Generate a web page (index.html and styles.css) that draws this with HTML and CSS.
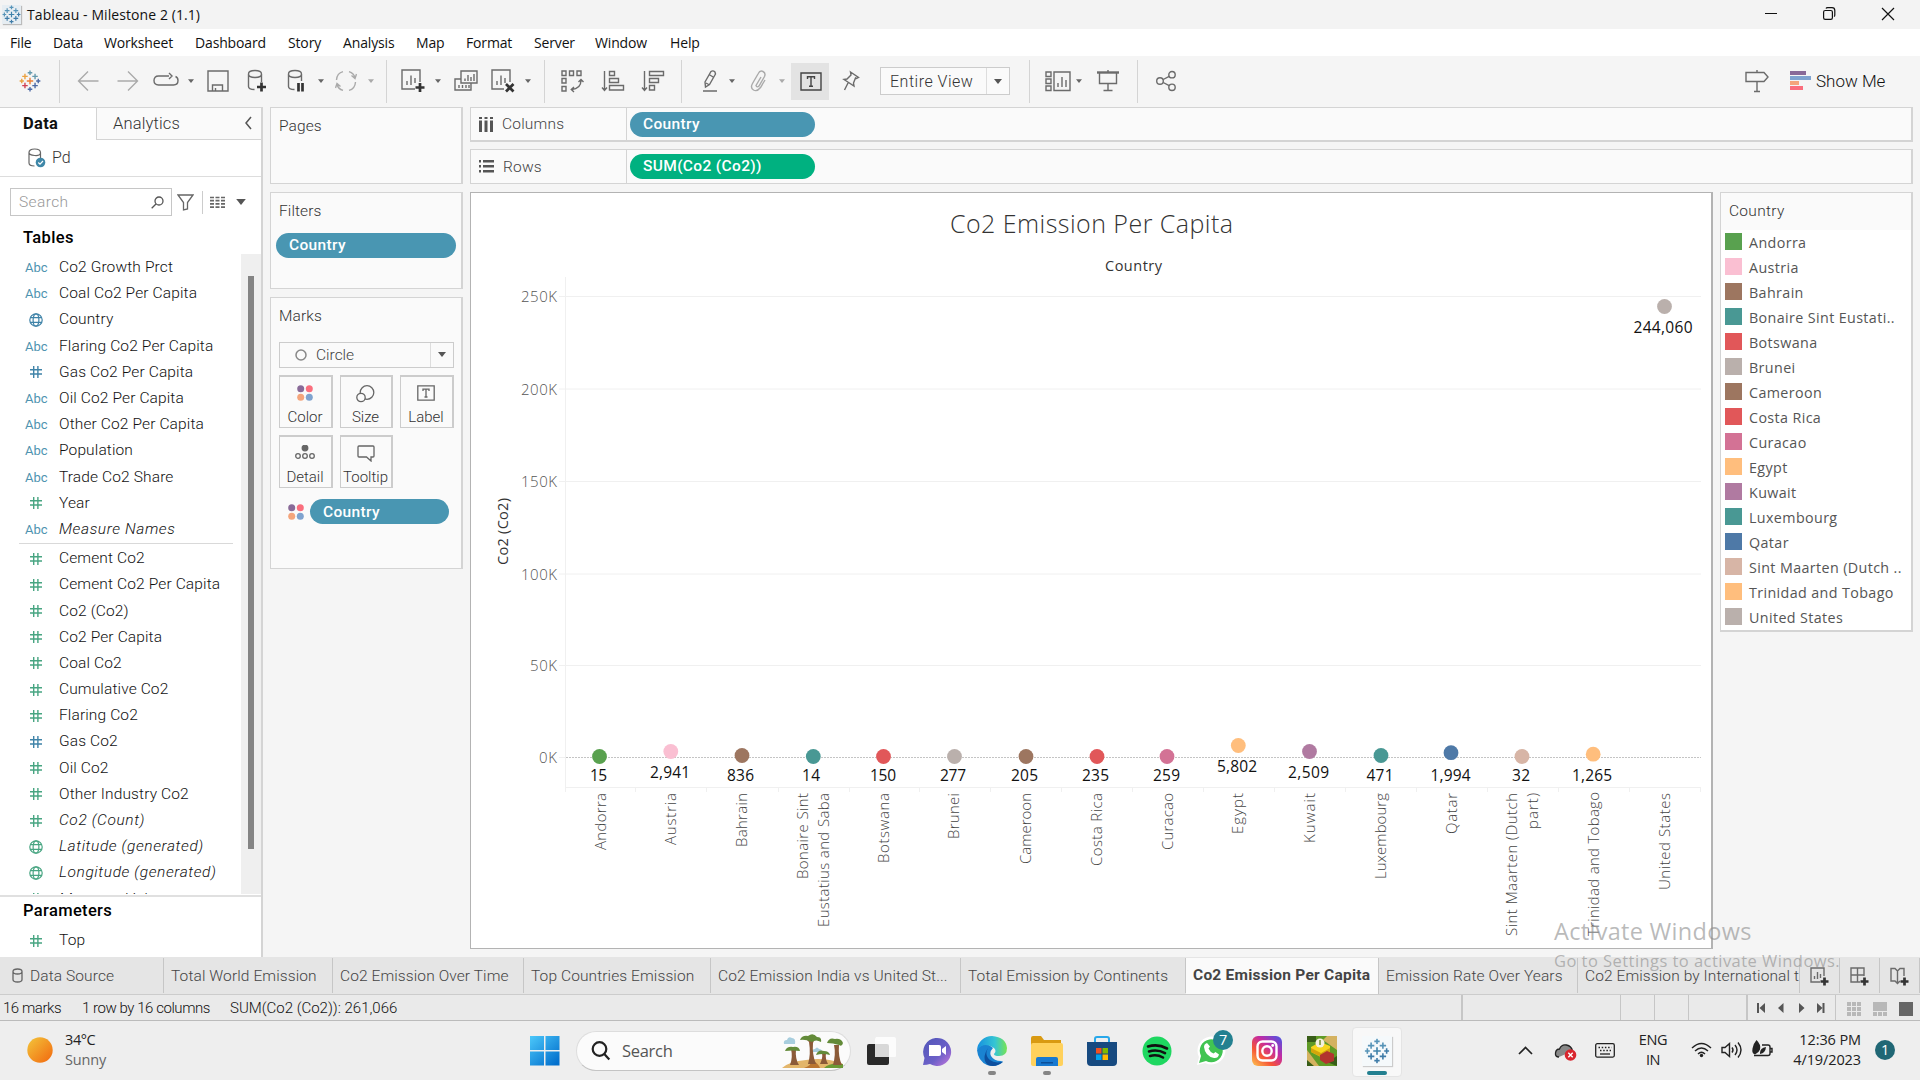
FILE: index.html
```html
<!DOCTYPE html>
<html lang="en">
<head>
<meta charset="utf-8">
<title>Tableau - Milestone 2 (1.1)</title>
<link rel="stylesheet" href="styles.css">
</head>
<body>
<svg class="defs" width="0" height="0">
  <symbol id="hash" viewBox="0 0 14 14"><path d="M4.7 1v12M8.9 1v12M1 4.8h12M1 9h12" fill="none" stroke="currentColor" stroke-width="1.4"/></symbol>
  <symbol id="globe" viewBox="0 0 14 14"><g fill="none" stroke="currentColor" stroke-width="1.2"><circle cx="7" cy="7" r="6.2"/><ellipse cx="7" cy="7" rx="2.9" ry="6.2"/><path d="M1.3 4.7h11.4M1.3 9.3h11.4"/></g></symbol>
  <symbol id="caret" viewBox="0 0 8 5"><path d="M0 0h8L4 5z" fill="currentColor"/></symbol>
  <symbol id="tlogo" viewBox="0 0 24 24"><g fill="none" stroke-width="1.5"><path stroke="var(--c1)" d="M12 8.5v7M8.5 12h7"/><path stroke="var(--c2)" d="M6.5 4v6M3.5 7h6"/><path stroke="var(--c3)" d="M17.5 4v6M14.5 7h6"/><path stroke="var(--c4)" d="M6.5 14v6M3.5 17h6"/><path stroke="var(--c5)" d="M17.5 14v6M14.5 17h6"/><path stroke="var(--c3)" d="M12 .5v5M9.5 3h5"/><path stroke="var(--c5)" d="M12 18.500v5M9.500 21h5M21 9.500v5M18.700 12h4.600"/><path stroke="var(--c2)" d="M3 9.500v5M.7 12h4.600"/></g></symbol>
  <symbol id="dots4" viewBox="0 0 16 16"><circle cx="3.700" cy="3.700" r="3.500" fill="#896a98"/><circle cx="12.300" cy="3.700" r="3.500" fill="#fa6e7d"/><circle cx="3.700" cy="12.300" r="3.500" fill="#f4a57c"/><circle cx="12.300" cy="12.300" r="3.500" fill="#7fa3cf"/></symbol>
</svg>

<header class="titlebar">
  <svg class="app-icon mono" width="19" height="19" viewBox="0 0 24 24"><use href="#tlogo"/></svg>
  <span class="app-title">Tableau - Milestone 2 (1.1)</span>
  <svg class="window-controls" width="132" height="14" viewBox="0 0 132 14" fill="none" stroke="#111" stroke-width="1.200"><path d="M0 6.500h12M117 1l12 12M129 1l-12 12"/><rect x="58.600" y="3.500" width="8.800" height="8.800" rx="1.600"/><path d="M61 1.500q.4-.8 1.500-.8h4.500q2.800 0 2.800 2.800v4.500q0 1.100-.8 1.600"/></svg>
</header>

<nav class="menubar"><span>File</span><span>Data</span><span>Worksheet</span><span>Dashboard</span><span>Story</span><span>Analysis</span><span>Map</span><span>Format</span><span>Server</span><span>Window</span><span>Help</span></nav>

<div class="toolbar">
  <span class="tool w59"><svg class="brand" width="22" height="22"><use href="#tlogo"/></svg></span>
  <i class="sep"></i>
  <span class="tool w40 m8 dim"><svg width="22" height="22" viewBox="0 0 22 22"><path d="M21.500 11H1.500M11 1.500L1.500 11l9.500 9.500"/></svg></span>
  <span class="tool w40 dim"><svg width="22" height="22" viewBox="0 0 22 22"><path d="M.5 11h20M11 1.500l9.500 9.500-9.500 9.500"/></svg></span>
  <span class="tool w36"><svg width="26" height="22" viewBox="0 0 26 22"><path d="M16 6H5.500Q1 6 1 10.500T5.500 15h15q4.500 0 4.500-4.500 0-3-2.500-4M16 3l3 3-3 3"/></svg></span>
  <span class="tool w14"><svg width="6" height="4"><use href="#caret"/></svg></span>
  <span class="tool w39"><svg width="22" height="22" viewBox="0 0 22 22"><path d="M1 1h20v20H1zM5.500 21v-6h10v6M8.500 21v-3"/></svg></span>
  <span class="tool w40"><svg width="20" height="24" viewBox="0 0 20 24"><path d="M1.500 5v12.500q0 3 6 3M14.500 5v8M1.500 5q0-3.500 6.500-3.500t6.500 3.500-6.500 3.500-6.500-3.500"/><path class="bold" d="M14.500 13.500v9M10 18h9"/></svg></span>
  <span class="tool w37"><svg width="18" height="24" viewBox="0 0 18 24"><path d="M1.500 5v12.500q0 3 6 3M14.500 5v7M1.500 5q0-3.500 6.500-3.500t6.500 3.500-6.500 3.500-6.500-3.500"/><path class="bold" d="M11.500 14v8.500M15.500 14v8.500"/></svg></span>
  <span class="tool w14"><svg width="6" height="4"><use href="#caret"/></svg></span>
  <span class="tool w35 dim"><svg width="22" height="22" viewBox="0 0 22 22"><path d="M1.500 10Q2 3 8 1.600M14 1.600q5 1.500 6 6.400M20.500 12q-.5 7-6.500 8.400M8 20.400q-5-1.500-6-6.400M16.500 5.500l3.500 3 1.500-4.500M5.500 16.500l-3.500-3L.5 18"/></svg></span>
  <span class="tool w16 dim"><svg width="6" height="4"><use href="#caret"/></svg></span>
  <i class="sep m7"></i>
  <span class="tool w37 m7"><svg width="24" height="24" viewBox="0 0 24 24"><path d="M14 20H1V1h18v12M6 16v-4M10 16V6.500M14 14V9"/><path class="bold" d="M19 14v9M14.500 18.500h9"/></svg></span>
  <span class="tool w13"><svg width="6" height="4"><use href="#caret"/></svg></span>
  <span class="tool w43"><svg width="24" height="24" viewBox="0 0 24 24"><path d="M7 2h16v12H7zM11 12V9.500M14 12V6M17 12V8M20 12V5M7 10H1v11h16v-7M5 19v-3M8.500 19v-3M12 19v-3M15 19v-3"/></svg></span>
  <span class="tool w31"><svg width="24" height="24" viewBox="0 0 24 24"><path d="M13 20H1V1h18v12M6 16v-4M10 16V6.500M14 14V9"/><path class="bold" d="M15 15l7.500 7.500M22.500 15L15 22.500"/></svg></span>
  <span class="tool w20"><svg width="6" height="4"><use href="#caret"/></svg></span>
  <i class="sep m6"></i>
  <span class="tool w40 m7"><svg width="24" height="24" viewBox="0 0 24 24"><path d="M2 2h4v4.500H2zM9.500 2h4v4.500h-4zM17 2h4v4.500h-4zM2 9.500h4V14H2zM2 17.500h4V22H2zM21 11q0 9-9.500 9.500M18.500 13l2.500-2.500L23.500 13M14 18l-2.700 2.500L14 23"/></svg></span>
  <span class="tool w42"><svg width="24" height="22" viewBox="0 0 24 22"><path d="M3.500 1v19M1 17.500l2.500 3 2.500-3M8.500 1.500h5v4h-5zM8.500 8.500h9v4h-9zM8.500 15.500h14v4.500h-14z"/></svg></span>
  <span class="tool w38"><svg width="24" height="22" viewBox="0 0 24 22"><path d="M3.500 1v19M1 17.500l2.500 3 2.500-3M8.500 1.500h14v4h-14zM8.500 8.500h9v4h-9zM8.500 15.500h5v4.500h-5z"/></svg></span>
  <i class="sep m9"></i>
  <span class="tool w29 m14"><svg width="18" height="24" viewBox="0 0 18 24"><path d="M3 13L9 2.500q2-1.500 4 .5l.5 2-6 10.500L3.500 18zM7 5.500l5 3M4 14l3.500 2M1 22h14"/></svg></span>
  <span class="tool w14"><svg width="6" height="4"><use href="#caret"/></svg></span>
  <span class="tool w40 dim"><svg width="18" height="22" viewBox="0 0 18 22"><path d="M11 7L6 15.500q1 2.500 3 .5l5.500-9.500Q16 3 13 1.500T8 4L2.500 13.500Q0 18 3.500 20t7-2.500L15 10"/></svg></span>
  <span class="tool w6 dim"><svg width="6" height="4"><use href="#caret"/></svg></span>
  <span class="tool on"><svg width="22" height="19" viewBox="0 0 22 19"><path d="M1 1h20v17H1z"/><path d="M7.500 7V4.800h7V7M11 4.800v9.200M9 14.200h4"/></svg></span>
  <span class="tool w43"><svg width="18" height="22" viewBox="0 0 18 22"><path d="M8.500 2l8 5.500-2 1-1-.5-2 5 .5 3-10-6.500 3-.5 4-4zM6 13l-3.500 7"/></svg></span>
  <div class="select fit"><span>Entire View</span><i><svg width="8" height="5"><use href="#caret"/></svg></i></div>
  <i class="sep m19"></i>
  <span class="tool w33 m11"><svg width="26" height="22" viewBox="0 0 26 22"><path d="M1 2h5v4.500H1zM1 9h5v4.500H1zM1 16h5v4.500H1zM9 2h16v18.500H9zM13 17v-4M17 17V7M21 17v-7"/></svg></span>
  <span class="tool w9"><svg width="6" height="4"><use href="#caret"/></svg></span>
  <span class="tool w50"><svg width="22" height="22" viewBox="0 0 22 22"><path class="mid" d="M0 2.500h22"/><path d="M11 0v3M2.500 3v10.500h17V3M11 13.500V20M6.500 20.500h9"/></svg></span>
  <i class="sep m4"></i>
  <span class="tool w39 m8"><svg width="22" height="22" viewBox="0 0 22 22"><circle cx="5" cy="11" r="3.300"/><circle cx="17" cy="4.700" r="3.200"/><circle cx="17" cy="17.300" r="3.200"/><path d="M8.200 9.500l6-3.200M8.200 12.500l6 3.200"/></svg></span>
  <span class="tool guide"><svg width="24" height="24" viewBox="0 0 24 24"><path d="M1 3.500h18l4 4.500-4 4.500H1zM12 1v2.500M12 12.500v10M9 22.500h6"/></svg></span>
  <span class="showme"><svg width="22" height="20" viewBox="0 0 22 20"><path fill="#896a98" d="M0 0h16v4H0z"/><path fill="#7fa3cf" d="M0 5h21v4H0z"/><path fill="#f4a57c" d="M0 10h9v4H0z"/><path fill="#fa6e7d" d="M0 15h13v4H0z"/></svg>Show Me</span>
</div>

<main class="workspace">
  <aside class="data-pane">
    <div class="pane-tabs"><b>Data</b><span>Analytics<svg width="8" height="14" viewBox="0 0 8 14"><path d="M7 1L2 7l5 6" fill="none" stroke="#555" stroke-width="1.500"/></svg></span></div>
    <div class="source"><svg width="18" height="20" viewBox="0 0 18 20" fill="none" stroke="#666" stroke-width="1.200"><path d="M1 4.500v10.500q0 3 5.500 3M12.500 4.500V10M1 4.500Q1 1 6.700 1t5.800 3.500-5.800 3T1 4.500"/><circle cx="12.500" cy="14.500" r="4.800" fill="#3f87a8" stroke="none"/><path d="M10.300 14.500l1.700 1.700 3-3.200" stroke="#fff"/></svg><span>Pd</span></div>
    <div class="search-row">
      <div class="search"><span>Search</span><svg width="13" height="13" viewBox="0 0 13 13" fill="none" stroke="#555" stroke-width="1.300"><circle cx="8" cy="5" r="4"/><path d="M5 8L.7 12.300"/></svg></div>
      <svg class="funnel" width="17" height="17" viewBox="0 0 17 17" fill="none" stroke="#666" stroke-width="1.300"><path d="M1 1h15l-5.500 7.500V15l-4 1V8.500z"/></svg>
      <i></i>
      <svg class="grid" width="16" height="13" viewBox="0 0 16 13"><path d="M0 1.500h16M0 4.700h16M0 7.900h16M0 11.100h16" stroke="#666" stroke-width="1.700" stroke-dasharray="4 1.500"/></svg>
      <svg class="c" width="10" height="6"><use href="#caret"/></svg>
    </div>
    <h2>Tables</h2>
    <div class="fields">
      <div class="list">
        <p><em>Abc</em>Co2 Growth Prct</p>
        <p><em>Abc</em>Coal Co2 Per Capita</p>
        <p><svg><use href="#globe"/></svg>Country</p>
        <p><em>Abc</em>Flaring Co2 Per Capita</p>
        <p><svg><use href="#hash"/></svg>Gas Co2 Per Capita</p>
        <p><em>Abc</em>Oil Co2 Per Capita</p>
        <p><em>Abc</em>Other Co2 Per Capita</p>
        <p><em>Abc</em>Population</p>
        <p><em>Abc</em>Trade Co2 Share</p>
        <p class="g"><svg><use href="#hash"/></svg>Year</p>
        <p class="it"><em>Abc</em>Measure Names</p>
        <hr>
        <p class="g"><svg><use href="#hash"/></svg>Cement Co2</p>
        <p class="g"><svg><use href="#hash"/></svg>Cement Co2 Per Capita</p>
        <p class="g"><svg><use href="#hash"/></svg>Co2 (Co2)</p>
        <p class="g"><svg><use href="#hash"/></svg>Co2 Per Capita</p>
        <p class="g"><svg><use href="#hash"/></svg>Coal Co2</p>
        <p class="g"><svg><use href="#hash"/></svg>Cumulative Co2</p>
        <p class="g"><svg><use href="#hash"/></svg>Flaring Co2</p>
        <p><svg><use href="#hash"/></svg>Gas Co2</p>
        <p class="g"><svg><use href="#hash"/></svg>Oil Co2</p>
        <p class="g"><svg><use href="#hash"/></svg>Other Industry Co2</p>
        <p class="g it"><svg><use href="#hash"/></svg>Co2 (Count)</p>
        <p class="g it"><svg><use href="#globe"/></svg>Latitude (generated)</p>
        <p class="g it"><svg><use href="#globe"/></svg>Longitude (generated)</p>
        <p class="g it"><svg><use href="#hash"/></svg>Measure Values</p>
      </div>
      <div class="scroll"><i></i></div>
    </div>
    <div class="params"><h2>Parameters</h2><p class="g"><svg><use href="#hash"/></svg>Top</p></div>
  </aside>

  <section class="cards">
    <div class="card pages"><h3>Pages</h3></div>
    <div class="card filters"><h3>Filters</h3><span class="pill">Country</span></div>
    <div class="card marks">
      <h3>Marks</h3>
      <div class="select mark-type"><span><svg width="12" height="12"><circle cx="6" cy="6" r="5" fill="none" stroke="#888" stroke-width="1.500"/></svg>Circle</span><i><svg width="8" height="5"><use href="#caret"/></svg></i></div>
      <div class="mark-grid">
        <div><svg width="16" height="16"><use href="#dots4"/></svg>Color</div>
        <div><svg width="19" height="18" viewBox="0 0 19 18" fill="#fafafa" stroke="#666" stroke-width="1.300"><circle cx="11" cy="7.500" r="6.800"/><circle cx="5" cy="12.500" r="4.200"/></svg>Size</div>
        <div><svg width="18" height="16" viewBox="0 0 18 16" fill="none" stroke="#666" stroke-width="1.300"><path d="M.8.8h16.400v14.400H.8zM6 6V4.200h6V6M9 4.200v7.600M7.500 12h3"/></svg>Label</div>
        <div><svg width="20" height="14" viewBox="0 0 20 14" fill="none" stroke="#666" stroke-width="1.300"><circle cx="10" cy="3" r="2.800" fill="#666"/><circle cx="3" cy="11" r="2.300"/><circle cx="10" cy="11" r="2.300"/><circle cx="17" cy="11" r="2.300"/></svg>Detail</div>
        <div><svg width="18" height="17" viewBox="0 0 18 17" fill="none" stroke="#666" stroke-width="1.300"><path d="M2 1h14q1 0 1 1v9q0 1-1 1h-2v4l-4.500-4H2q-1 0-1-1V2q0-1 1-1z"/></svg>Tooltip</div>
      </div>
      <div class="mark-pill"><svg width="16" height="16"><use href="#dots4"/></svg><span class="pill">Country</span></div>
    </div>
  </section>

  <section class="sheet">
    <div class="shelf cols"><span><svg width="14" height="15" viewBox="0 0 14 15" fill="#555"><path d="M0 0h3v2H0zM5.500 0h3v2h-3zM11 0h3v2h-3zM0 3.500h3V15H0zM5.500 3.500h3V15h-3zM11 3.500h3V15h-3z"/></svg>Columns</span><b class="pill">Country</b></div>
    <div class="shelf rows"><span><svg width="15" height="13" viewBox="0 0 15 13" fill="#555"><path d="M0 0h2v2.500H0zM0 5h2v2.500H0zM0 10h2v2.500H0zM4 0h11v2.500H4zM4 5h11v2.500H4zM4 10h11v2.500H4z"/></svg>Rows</span><b class="pill green">SUM(Co2 (Co2))</b></div>
    <div class="view-row">
      <div class="view">
        <svg class="chart" width="1240" height="755" viewBox="471 193 1240 755">
          <text class="title" x="950" y="233" textLength="283">Co2 Emission Per Capita</text>
          <text class="field" x="1105" y="271" textLength="57">Country</text>
          <g class="gridlines"><path d="M559 296.500H1701M559 389H1701M559 481.500H1701M559 574H1701M559 665.500H1701"/><path d="M565.500 277V792M559 757.500h6M565.500 787.500H1701M635.500 788v4M706.500 788v4M778.500 788v4M849.500 788v4M919.500 788v4M990.500 788v4M1061.500 788v4M1132.500 788v4M1203.500 788v4M1274.500 788v4M1345.500 788v4M1416.500 788v4M1487.500 788v4M1558.500 788v4M1629.500 788v4M1700.500 788v4"/></g>
          <path class="zero" d="M566 757.500H1701"/>
          <g class="axis"><text x="521" y="302" textLength="36">250K</text><text x="521" y="395" textLength="36">200K</text><text x="521" y="487" textLength="36">150K</text><text x="521" y="580" textLength="36">100K</text><text x="530" y="671" textLength="27">50K</text><text x="539" y="763" textLength="18">0K</text></g>
          <text class="field" transform="translate(508 565) rotate(-90)" textLength="67">Co2 (Co2)</text>
          <g>
            <circle cx="599.500" cy="756.500" r="7.400" fill="#59a14f"/><circle cx="670.800" cy="751.500" r="7.400" fill="#fabfd2"/><circle cx="742" cy="755.500" r="7.400" fill="#9d7660"/><circle cx="813.300" cy="756.500" r="7.400" fill="#499894"/><circle cx="883.500" cy="756.500" r="7.400" fill="#e15759"/><circle cx="954.500" cy="756.500" r="7.400" fill="#bab0ac"/><circle cx="1026" cy="756.500" r="7.400" fill="#9d7660"/><circle cx="1097" cy="756.500" r="7.400" fill="#e15759"/><circle cx="1167" cy="756.500" r="7.400" fill="#d37295"/><circle cx="1238.300" cy="745.500" r="7.400" fill="#ffbe7d"/><circle cx="1309.500" cy="751.500" r="7.400" fill="#b07aa1"/><circle cx="1381" cy="755.500" r="7.400" fill="#499894"/><circle cx="1451" cy="752.700" r="7.400" fill="#4e79a7"/><circle cx="1522" cy="756.500" r="7.400" fill="#d7b5a6"/><circle cx="1593.200" cy="754.200" r="7.400" fill="#ffbe7d"/><circle cx="1664.500" cy="306.500" r="7.400" fill="#bab0ac"/>
          </g>
          <g class="values">
            <text x="598.500" y="781" textLength="17">15</text><text x="670" y="778" textLength="40">2,941</text><text x="740.500" y="781" textLength="27">836</text><text x="811" y="781" textLength="18">14</text><text x="883" y="781" textLength="26">150</text><text x="953" y="781" textLength="26">277</text><text x="1024.500" y="781" textLength="27">205</text><text x="1095.500" y="781" textLength="27">235</text><text x="1166.500" y="781" textLength="27">259</text><text x="1237" y="772" textLength="40">5,802</text><text x="1308.500" y="778" textLength="41">2,509</text><text x="1380" y="781" textLength="27">471</text><text x="1450.500" y="781" textLength="40">1,994</text><text x="1521" y="781" textLength="18">32</text><text x="1592" y="781" textLength="40">1,265</text><text x="1663" y="333" textLength="59">244,060</text>
          </g>
          <g class="cats">
            <text transform="translate(606 850) rotate(-90)" textLength="57">Andorra</text><text transform="translate(676 845) rotate(-90)" textLength="52">Austria</text><text transform="translate(747 847) rotate(-90)" textLength="54">Bahrain</text><text transform="translate(808 879) rotate(-90)" textLength="86">Bonaire Sint</text><text transform="translate(829 927) rotate(-90)" textLength="134">Eustatius and Saba</text><text transform="translate(889 863) rotate(-90)" textLength="70">Botswana</text><text transform="translate(959 839) rotate(-90)" textLength="46">Brunei</text><text transform="translate(1031 864) rotate(-90)" textLength="71">Cameroon</text><text transform="translate(1102 866) rotate(-90)" textLength="73">Costa Rica</text><text transform="translate(1173 850) rotate(-90)" textLength="57">Curacao</text><text transform="translate(1243 834) rotate(-90)" textLength="41">Egypt</text><text transform="translate(1315 843) rotate(-90)" textLength="50">Kuwait</text><text transform="translate(1386 879) rotate(-90)" textLength="86">Luxembourg</text><text transform="translate(1457 834) rotate(-90)" textLength="41">Qatar</text><text transform="translate(1516.500 936) rotate(-90)" textLength="143">Sint Maarten (Dutch</text><text transform="translate(1538 829) rotate(-90)" textLength="36">part)</text><text transform="translate(1598.500 936) rotate(-90)" textLength="144">Trinidad and Tobago</text><text transform="translate(1669.500 890) rotate(-90)" textLength="97">United States</text>
          </g>
        </svg>
      </div>
      <div class="legend">
        <h3>Country</h3>
        <ul>
          <li class="c-green">Andorra</li><li class="c-blush">Austria</li><li class="c-brown">Bahrain</li><li class="c-teal">Bonaire Sint Eustati..</li><li class="c-red">Botswana</li><li class="c-grey">Brunei</li><li class="c-brown">Cameroon</li><li class="c-red">Costa Rica</li><li class="c-pink">Curacao</li><li class="c-orange">Egypt</li><li class="c-purple">Kuwait</li><li class="c-teal">Luxembourg</li><li class="c-blue">Qatar</li><li class="c-tan">Sint Maarten (Dutch ..</li><li class="c-orange">Trinidad and Tobago</li><li class="c-grey">United States</li>
        </ul>
      </div>
    </div>
  </section>
</main>

<nav class="tabs">
  <span class="t1"><svg width="11" height="15" viewBox="0 0 11 15" fill="none" stroke="#666" stroke-width="1.300"><path d="M1 3.500v8q0 2.500 4.500 2.500T10 11.500v-8Q10 1 5.500 1T1 3.500 5.500 6 10 3.500"/></svg>Data Source</span>
  <span class="t2">Total World Emission</span><span class="t3">Co2 Emission Over Time</span><span class="t4">Top Countries Emission</span><span class="t5">Co2 Emission India vs United St...</span><span class="t6">Total Emission by Continents</span><span class="t7">Co2 Emission Per Capita</span><span class="t8">Emission Rate Over Years</span><span class="t9">Co2 Emission by International t</span>
  <span class="new"><svg width="20" height="20" viewBox="0 0 20 20"><path d="M10 15H1V1h13v8M4.500 12V9M7.500 12V5M10.500 11V7"/><path class="bold" d="M14.500 10.500v8M10.500 14.500h8"/></svg></span>
  <span class="new"><svg width="20" height="20" viewBox="0 0 20 20"><path d="M10 15H1V1h13v8M7.500 1v14M1 8h13"/><path class="bold" d="M14.500 10.500v8M10.500 14.500h8"/></svg></span>
  <span class="new"><svg width="20" height="20" viewBox="0 0 20 20"><path d="M10 14l-2.500 2.500L5 14H1V1.500h4L7.500 4 10 1.500h4V9M7.500 4v12"/><path class="bold" d="M14.500 10.500v8M10.500 14.500h8"/></svg></span>
</nav>

<footer class="status">
  <span class="s1">16 marks</span><span class="s2">1 row by 16 columns</span><span class="s3">SUM(Co2 (Co2)): 261,066</span>
  <i class="a"></i><i class="b"></i><i class="c"></i><i class="d"></i>
  <div class="pager"><svg width="68" height="10" viewBox="0 0 68 10" fill="#555"><path d="M0 0h2v10H0zM8 0v10L2.500 5zM26.500 0v10L21 5zM42 0v10l5.500-5zM60 0v10l5.500-5zM65.500 0h2v10h-2z"/></svg></div>
  <div class="modes"><svg width="66" height="14" viewBox="0 0 66 14"><path fill="#b8b8b8" d="M0 0h4v4H0zM5 0h4v4H5zM10 0h4v4h-4zM0 5h4v4H0zM5 5h4v4H5zM10 5h4v4h-4zM0 10h4v4H0zM5 10h4v4H5zM10 10h4v4h-4zM26 0h14v9H26zM26 10h4v4h-4zM31 10h4v4h-4zM36 10h4v4h-4z"/><path fill="#666" d="M52 0h14v14H52z"/></svg></div>
</footer>

<footer class="taskbar">
  <svg class="sun" width="26" height="26"><defs><linearGradient id="sg" x1="0" y1="0" x2="1" y2="1"><stop offset="0" stop-color="#f3c63b"/><stop offset="1" stop-color="#f2670e"/></linearGradient></defs><circle cx="13" cy="13" r="12.700" fill="url(#sg)"/></svg>
  <div class="weather">34°C<small>Sunny</small></div>
  <svg class="win" width="30" height="30" viewBox="0 0 30 30"><defs><linearGradient id="wg" gradientUnits="userSpaceOnUse" x1="0" y1="0" x2="26" y2="28"><stop offset="0" stop-color="#4cc8fa"/><stop offset="1" stop-color="#0370cd"/></linearGradient></defs><path fill="url(#wg)" d="M0 0h14v14H0zM15.500 0h14v14h-14zM0 15.500h14v14H0zM15.500 15.500h14v14h-14z"/></svg>
  <div class="tsearch"><svg width="20" height="20" viewBox="0 0 20 20" fill="none" stroke="#222" stroke-width="2.200"><circle cx="8.500" cy="8" r="6.800"/><path d="M13.300 13l5 5.500"/></svg><span>Search</span>
    <svg class="trees" width="62" height="34" viewBox="0 0 62 34"><path fill="#a8cede" d="M2 10q-1-4 3-4 1-4 5-2 4 0 3 6zM30 18q0-3 3-3 2-3 4 0 3 0 3 3z"/><path fill="#e3b66b" d="M0 34q8-7 24-8 20-3 37 4v4z"/><path fill="#ba7631" d="M22 34q8-3 8-8 6 3 8 8z"/><path fill="#6a9a35" d="M42 34q6-6 19-4v4z"/><path fill="#8b5a38" d="M26 30q3-10 1-22l-4-4h10l-2 5q-1 12 3 21zM8 31q3-8 1-16h5q-1 10 3 16zM38 30q3-6 2-11h4q-1 6 2 11zM51 31q3-11 1-20h5q-1 12 3 20z"/><path fill="#638b39" d="M18 6q2-5 8-4 5-4 9 1 5 0 4 5-5-3-9 0-7-3-12-2zM3 17q2-5 8-4 6-1 7 4-7-1-15 0zM34 21q2-6 8-4 5 0 6 4-7-2-14 0zM45 9q2-6 8-4 6-1 8 4-1 4-4 2-6-2-12-2z"/></svg></div>
  <div class="apps">
    <span><svg width="30" height="30" viewBox="0 0 30 30"><rect y="8" width="22" height="21" rx="2" fill="#292929"/><path d="M9 1h18q2 0 2 2v17q0 1-1 1H8V3z" fill="#fff" opacity=".82"/></svg></span>
    <span><svg width="30" height="30" viewBox="0 0 30 30"><defs><linearGradient id="tg" x1="0" x2="1" y1="0" y2="1"><stop stop-color="#5056b8"/><stop offset=".6" stop-color="#6c60c8"/><stop offset="1" stop-color="#c777dd"/></linearGradient></defs><path d="M1 29l1.500-7A14 14 0 1 1 8 28q-3 1-7 1z" fill="url(#tg)"/><path d="M7 9h10q2 0 2 2v7q0 2-2 2H7zM20 13l4-3v9l-4-3z" fill="#fff"/></svg></span>
    <span class="run"><svg width="32" height="32" viewBox="0 0 32 32"><defs><linearGradient id="eg" x1="0" x2="1"><stop stop-color="#1690df"/><stop offset=".6" stop-color="#35c5d4"/><stop offset="1" stop-color="#78e452"/></linearGradient></defs><path fill="#1a83d2" d="M1 15q4-7 12-5l4 3q-4 4-2 8 3 5 10 5l2 1Q20 33 11 30 2 26 1 15z"/><path fill="#0d4f9e" d="M12 13q-4 7 2 12 5 4 13 1.500Q20 33 12 30 5 24 12 13z"/><path fill="url(#eg)" d="M1 15A15 15 0 0 1 16 1q14 1 15 12 0 8-8 8-5 0-5-2 3-3 0-6Q8 6 1 15z"/></svg></span>
    <span class="run"><svg width="32" height="30" viewBox="0 0 32 30"><path fill="#d99a12" d="M0 2q0-2 2-2h8l3 4h17v7H0z"/><path fill="#ffd15c" d="M2 7h28q2 0 2 2v19q0 2-2 2H2q-2 0-2-2V9q0-2 2-2z"/><path fill="#1879d0" d="M5 30v-7q0-2 2-2h18q2 0 2 2v7z"/><path fill="#0b4f99" d="M10 26h12v1.500H10z"/></svg></span>
    <span><svg width="30" height="30" viewBox="0 0 30 30"><path d="M8 7V3q0-2 2-2h10q2 0 2 2v4" fill="none" stroke="#28a8ea" stroke-width="2"/><path fill="#174a80" d="M0 6h30v20q0 4-4 4H4q-4 0-4-4z"/><path fill="#f25022" d="M9 12h5.500v5.500H9z"/><path fill="#7fba00" d="M15.500 12H21v5.500h-5.500z"/><path fill="#00a4ef" d="M9 18.500h5.500V24H9z"/><path fill="#ffb900" d="M15.500 18.500H21V24h-5.500z"/></svg></span>
    <span><svg width="30" height="30" viewBox="0 0 30 30"><circle cx="15" cy="15" r="14.500" fill="#1ed760"/><path d="M6 10.500q10-3 19 2M7 15.500q8.500-2.500 16 1.700M8 20q7-2 13 1.500" fill="none" stroke="#111" stroke-width="2.600" stroke-linecap="round"/></svg></span>
    <span class="wa"><svg width="31" height="31" viewBox="0 0 31 31"><path d="M1 30l2-8A14 14 0 1 1 9 28z" fill="#fff"/><path d="M3 28l2-7a11.500 11.500 0 1 1 5 5z" fill="#41c452"/><path fill="#fff" d="M11 8l3 3.500-1.500 2q1.500 3.500 5 5l2-1.500 3.500 2.500q-1 4-5 3.500Q9 21 8 12q0-3 3-4z"/></svg><b>7</b></span>
    <span><svg width="30" height="30" viewBox="0 0 30 30"><defs><linearGradient id="ig" x1="0" y1="1" x2=".9" y2="0"><stop stop-color="#fdc64f"/><stop offset=".35" stop-color="#f65337"/><stop offset=".65" stop-color="#c32aa3"/><stop offset="1" stop-color="#5252e0"/></linearGradient></defs><rect width="30" height="30" rx="6" fill="url(#ig)"/><g fill="none" stroke="#fff" stroke-width="2.400"><rect x="5.500" y="5.500" width="19" height="19" rx="5"/><circle cx="15" cy="15" r="4.700"/></g><circle cx="20.700" cy="9.500" r="1.400" fill="#fff"/></svg></span>
    <span><svg width="30" height="30" viewBox="0 0 30 30"><path fill="#609b26" d="M0 0h30v30H0z"/><path fill="#d4b260" d="M0 14L12 30H0zM20 0h10v14L16 4z"/><path fill="#385d18" d="M0 0h9v6H0zM0 24l7 6H0zM20 26l10-6v10z"/><path fill="#f7d51d" d="M4 11l9-5 10 4v6l-9 5-10-5z"/><path fill="#d3a50c" d="M4 12l10 5 9-5v4l-9 5-10-5z"/><path fill="#b2332e" d="M13 19l7-4 7 3v7l-8 3-6-4z"/><circle cx="13" cy="7" r="4.500" fill="#f4f0df"/><path stroke="#6f8f2b" stroke-width="1.500" d="M13 4v5"/></svg></span>
    <span class="active"><svg class="mono tile" width="30" height="30" viewBox="-2 -2 28 28"><use href="#tlogo" width="24" height="24"/></svg></span>
  </div>
  <svg class="tray" width="60" height="22" viewBox="0 0 60 22"><path d="M1 14l6.500-6.500L14 14" fill="none" stroke="#222" stroke-width="1.700"/><path d="M41 17q-4 0-3.500-4t4-4q2-5 7-4t6 6" fill="#888" stroke="#222" stroke-width="1.300"/><circle cx="52.500" cy="15" r="5.800" fill="#d9252e"/><path d="M50.300 12.800l4.400 4.400M54.700 12.800l-4.400 4.400" stroke="#fff" stroke-width="1.400"/></svg>
  <svg class="kbd" width="20" height="15" viewBox="0 0 20 15" fill="none" stroke="#222" stroke-width="1.300"><rect x=".7" y=".7" width="18.600" height="13.400" rx="1.500"/><path d="M3.500 4.500h13M5 7.500h11" stroke-dasharray="1.500 1.700"/><path d="M5 11h10"/></svg>
  <div class="lang">ENG<br>IN</div>
  <svg class="net" width="82" height="20" viewBox="0 0 82 20" fill="none" stroke="#222" stroke-width="1.400"><path d="M1 8q9.500-9 19 0M4 11q6.500-6 13 0M7 14q3.500-3.500 7 0"/><circle cx="10.500" cy="15.500" r="1.700" fill="#222" stroke="none"/><path d="M31 7.500h3l4.500-4v13l-4.500-4h-3zM41 7.500q2 2.500 0 5M44 5q4 5 0 10M47 2.500q6 7.500 0 15"/><path d="M71 5h6q2 0 2 2v6.500q0 2-2 2H63M79 8.500h2v3.500h-2"/><path fill="#222" stroke="none" d="M65.500 0q5 5 3.500 9.500-1 3-5 5-3.500-1-2.500-6Q62 4 65.500 0zM69 13q0-5 6-6-.5 6-6 7z"/></svg>
  <div class="clock">12:36 PM<br>4/19/2023</div>
  <b class="notice">1</b>
</footer>

<div class="watermark"><p>Activate Windows</p><span>Go to Settings to activate Windows.</span></div>
</body>
</html>
```
FILE: styles.css
```css
* { box-sizing: border-box; }
body { margin: 0; width: 1920px; height: 1080px; overflow: hidden; position: relative; display: flex; flex-direction: column; background: #f5f5f5; color: #222; font: 300 15.5px Roboto, "Liberation Sans", sans-serif; }
svg { display: block; flex: none; }
i, em { font-style: normal; }
p, h2, h3, ul { margin: 0; padding: 0; }
.defs { position: absolute; }
.mono { --c1: #3f83ab; --c2: #5794b8; --c3: #5794b8; --c4: #3f7ca8; --c5: #3f7ca8; }
.brand { --c1: #ed7c32; --c2: #eba13f; --c3: #6499ad; --c4: #cf4053; --c5: #4c69a5; }

/* window chrome */
.titlebar { height: 29px; flex: none; background: #f3f3f3; display: flex; align-items: center; padding: 0 0 1px 2px; color: #111; font: 400 14px "Open Sans", sans-serif; }
.app-icon { background: #e6edf2; box-shadow: 1px 1px 1px #bbb; margin-right: 6px; }
.app-title { letter-spacing: .08px; }
.window-controls { margin: 0 23px 0 auto; }
.menubar { height: 27px; flex: none; background: #fff; display: grid; grid-template-columns: 43px 51px 91px 93px 55px 73px 50px 68px 61px 75px 60px; align-items: center; padding-left: 10px; color: #111; font: 400 14px "Open Sans", sans-serif; letter-spacing: -.15px; }
.toolbar { height: 51px; flex: none; display: flex; align-items: center; padding-bottom: 1px; color: #666; }
.sep { width: 1px; height: 43px; background: #d4d4d4; flex: none; }
.tool { height: 37px; flex: none; display: flex; align-items: center; justify-content: center; }
.tool svg, .new svg { fill: none; stroke: #6b6b6b; stroke-width: 1.4; }
.tool svg.brand, .tool svg:has(use) { stroke: none; }
.tool.dim { color: #aaa; }
.tool.dim svg { stroke: #aaa; }
.tool.dim svg:has(use) { stroke: none; }
.bold { stroke: #333; stroke-width: 2.7; }
.mid { stroke-width: 2.4; }
.on { width: 38px; background: #e3e3e3; margin-left: 6px; padding-left: 1px; }
.tool.on svg { stroke: #444; }
.w6 { width: 6px; } .w9 { width: 9px; } .w13 { width: 13px; } .w14 { width: 14px; } .w16 { width: 16px; } .w20 { width: 20px; } .w29 { width: 29px; } .w31 { width: 31px; } .w33 { width: 33px; } .w35 { width: 35px; } .w36 { width: 36px; } .w37 { width: 37px; } .w38 { width: 38px; } .w39 { width: 39px; } .w40 { width: 40px; } .w42 { width: 42px; } .w43 { width: 43px; } .w50 { width: 50px; } .w59 { width: 59px; }
.m4 { margin-left: 4px; } .m6 { margin-left: 6px; } .m7 { margin-left: 7px; } .m8 { margin-left: 8px; } .m9 { margin-left: 9px; } .m11 { margin-left: 11px; } .m14 { margin-left: 14px; } .m19 { margin-left: 19px; }
.select { display: flex; border: 1px solid #ccc; background: #fafafa; color: #333; }
.select span { flex: 1; display: flex; align-items: center; }
.select i { width: 23px; border-left: 1px solid #ddd; display: flex; align-items: center; justify-content: center; color: #555; }
.fit { width: 130px; height: 28px; margin-left: 8px; padding-left: 9px; font-size: 16px; letter-spacing: .5px; }
.guide { width: 37px; margin-left: auto; }
.showme { width: 145px; padding-left: 15px; display: flex; align-items: center; gap: 4px; color: #111; font-size: 17px; }

/* data pane */
.workspace { height: 850px; flex: none; display: flex; }
.data-pane { width: 263px; border-right: 2px solid #d4d4d4; background: #fff; display: flex; flex-direction: column; color: #111; }
.pane-tabs { height: 33px; flex: none; display: flex; border-top: 1px solid #d4d4d4; font-size: 16.5px; }
.pane-tabs b { width: 96px; padding: 6px 0 0 23px; font-weight: 700; letter-spacing: .3px; }
.pane-tabs span { flex: 1; display: flex; justify-content: space-between; align-items: center; background: #fafafa; border: 1px solid #d4d4d4; border-width: 0 0 1px 1px; padding: 0 9px 1px 16px; color: #333; letter-spacing: .15px; }
.source { height: 37px; flex: none; border-bottom: 1px solid #ddd; display: flex; align-items: center; gap: 6px; padding: 0 0 1px 28px; color: #333; font-size: 16px; }
.search-row { display: flex; align-items: center; margin-top: 11px; height: 28px; flex: none; padding-left: 10px; }
.search { width: 162px; height: 28px; border: 1px solid #c6c6c6; display: flex; align-items: center; justify-content: space-between; padding: 0 7px 0 8px; color: #999; letter-spacing: .4px; }
.funnel { margin: 0 8px 0 5px; }
.search-row i { width: 1px; height: 23px; background: #ccc; margin-right: 7px; }
.grid { margin-right: 10px; }
.c { color: #555; }
h2 { font: 500 16.500px Roboto, sans-serif; letter-spacing: .35px; color: #000; padding-left: 23px; }
.search-row + h2 { height: 38px; line-height: 43px; flex: none; }
.fields { height: 640px; flex: none; display: flex; overflow: hidden; }
.list { width: 241px; padding-left: 25px; overflow: hidden; }
.list p, .params p { height: 26.2px; display: flex; align-items: center; gap: 13px; color: #111; white-space: nowrap; letter-spacing: .13px; }
.list em { width: 21px; font-size: 13px; font-weight: 400; color: #4e93b0; text-align: center; padding-top: 1px; font-style: normal; letter-spacing: 0; }
.list p svg, .params p svg { width: 14px; height: 14px; margin: 1px 3.500px 0 3.500px; color: #3f83a8; }
.list p.g svg, .params p.g svg { color: #48a582; }
.list p.it { font-style: italic; letter-spacing: .6px; }
hr { border: 0; border-top: 1px solid #d9d9d9; margin: 1px 8px 1px -6px; height: 0; }
.scroll { width: 20px; background: #efefef; padding: 22px 0 0 7px; }
.scroll i { display: block; width: 6px; height: 573px; background: #848484; }
.params { flex: 1; margin-top: 1px; border-top: 2px solid #e0e0e0; padding-top: 4px; }
.params h2 { height: 26px; padding-top: 0; }
.params p { padding-left: 25px; height: 26px; }

/* cards */
.cards { width: 193px; margin-left: 7px; display: flex; flex-direction: column; gap: 8px; flex: none; }
.card { border: 1px solid #d4d4d4; border-right-width: 2px; background: #fafafa; color: #333; }
h3 { font: 300 15.500px Roboto, sans-serif; letter-spacing: .1px; color: #333; padding-left: 8px; }
.card h3 { line-height: 36px; height: 39px; }
.pages { height: 77px; }
.filters { height: 97px; }
.marks { height: 272px; }
.pill { display: block; height: 25px; line-height: 25px; border-radius: 13px; background: #4996b2; color: #fff; padding-left: 13px; font-weight: 500; font-size: 15.500px; letter-spacing: .35px; }
.filters .pill { width: 180px; margin: 1px 0 0 5px; }
.mark-type { margin: 5px 0 7px 8px; width: 175px; height: 26px; }
.mark-type span { padding-left: 15px; gap: 9px; color: #444; }
.mark-type svg { margin-top: -1px; }
.mark-grid { display: grid; grid-template-columns: 54px 53px 54px; grid-auto-rows: 53px; gap: 7px; margin-left: 8px; }
.mark-grid div { border: 1px solid #ccc; border-width: 2px 2px 1px 1px; display: flex; flex-direction: column; align-items: center; justify-content: space-between; padding: 8px 1px 1px 0; font-size: 15px; white-space: nowrap; line-height: 18px; }
.mark-pill { display: flex; align-items: center; margin: 11px 0 0 17px; gap: 6px; }
.mark-pill .pill { width: 139px; line-height: 26px; }

/* sheet */
.sheet { margin-left: 7px; width: 1443px; display: flex; flex-direction: column; }
.shelf { height: 35px; flex: none; border: 1px solid #d4d4d4; border-right-width: 2px; background: #fafafa; display: flex; align-items: center; margin-bottom: 7px; }
.shelf.rows { margin-bottom: 8px; }
.cols { border-bottom-width: 2px; }
.shelf span { width: 156px; height: 100%; border-right: 1px solid #d4d4d4; display: flex; align-items: center; gap: 9px; padding: 0 0 0 8px; color: #444; letter-spacing: .2px; }
.shelf .pill { width: 185px; margin-left: 3px; }
.shelf .green { background: #00b180; margin-top: -1px; }
.view-row { display: flex; gap: 7px; align-items: flex-start; }
.view { width: 1243px; height: 757px; border: 1px solid #b3b3b3; border-right-width: 2px; background: #fff; }
.chart { font-family: "Open Sans", sans-serif; font-size: 15px; font-weight: 300; }
.title { font-size: 25px; fill: #333; }
.field { font-weight: 500; font-size: 14.500px; fill: #333; }
.gridlines { fill: none; stroke: #f0f0f0; }
.zero { stroke: #c4c4c4; stroke-dasharray: 2 1; }
.axis { fill: #555; }
.values { fill: #111; text-anchor: middle; font-size: 15.500px; font-weight: 400; }
.cats { fill: #444; font-weight: 300; }
.legend { width: 193px; height: 440px; border: 1px solid #d4d4d4; border-width: 1px 2px 2px 1px; background: #fff; }
.legend h3 { height: 37px; line-height: 37px; background: #fafafa; letter-spacing: .3px; }
.legend ul { list-style: none; padding: 3px 0 0 4px; }
.legend li { height: 25px; display: flex; gap: 7px; font: 400 14.300px/20px "Open Sans", sans-serif; letter-spacing: .38px; color: #555; white-space: nowrap; }
.legend li::before { content: ""; width: 17px; height: 17px; background: var(--k); flex: none; }
.c-green { --k: #59a14f; } .c-blush { --k: #fabfd2; } .c-brown { --k: #9d7660; } .c-teal { --k: #499894; } .c-red { --k: #e15759; } .c-grey { --k: #bab0ac; } .c-pink { --k: #d37295; } .c-orange { --k: #ffbe7d; } .c-purple { --k: #b07aa1; } .c-blue { --k: #4e79a7; } .c-tan { --k: #d7b5a6; }

/* sheet tabs */
.tabs { height: 38px; flex: none; background: #e5e5e5; border-bottom: 1px solid #ccc; display: flex; padding-top: 1px; color: #444; }
.tabs span { flex: none; border-right: 1px solid #c6c6c6; padding-left: 7px; display: flex; align-items: center; white-space: nowrap; overflow: hidden; letter-spacing: .1px; margin-bottom: 1px; }
.tabs .t1 { width: 164px; padding-left: 12px; gap: 7px; } .t2 { width: 169px; } .t3 { width: 191px; } .t4 { width: 187px; } .t5 { width: 250px; } .t6 { width: 225px; } .t7 { width: 193px; } .t8 { width: 199px; } .t9 { width: 222px; }
.tabs .t7 { background: #fafafa; font-weight: 700; color: #444; letter-spacing: .24px; margin-bottom: 0; padding-bottom: 2px; }
.tabs .new { width: 40px; padding-left: 10px; }
.new svg { margin-top: 3px; }

/* status bar */
.status { height: 26px; flex: none; background: #eaeaea; border-bottom: 1px solid #bbb; display: flex; line-height: 26px; white-space: nowrap; color: #111; font-size: 15px; }
.status span { flex: none; }
.s1, .s2 { letter-spacing: -.45px; }
.s1 { width: 82px; padding-left: 3px; } .s2 { width: 148px; } .s3 { width: 1231px; }
.status i { border-left: 1px solid #c6c6c6; flex: none; }
.a { width: 159px; } .b { width: 34px; } .status .c { width: 34px; } .d { width: 58px; }
.status i.a { border-left-width: 2px; }
.pager { width: 89px; border-left: 2px solid #c6c6c6; padding: 8px 0 0 9px; }
.modes { border-left: 1px solid #c6c6c6; padding: 7px 0 0 11px; }

/* taskbar */
.taskbar { height: 59px; flex: 1; background: #eee; display: flex; align-items: center; font: 400 14.500px/20px "Open Sans", sans-serif; letter-spacing: -.4px; color: #222; }
.sun { margin-left: 27px; margin-top: -2px; }
.weather { width: 477px; flex: none; padding-left: 12px; margin-top: -2px; }
.weather small { display: block; font-size: 14.500px; color: #666; letter-spacing: -.15px; }
.win { margin-right: 16px; }
.tsearch { width: 275px; height: 40px; flex: none; background: #fbfbfb; border: 1px solid #ddd; border-bottom-color: #c4c4c4; border-radius: 20px; display: flex; align-items: center; padding-left: 14px; font-size: 16.500px; color: #555; }
.tsearch span { width: 171px; padding-left: 11px; letter-spacing: -.3px; }
.apps { display: flex; margin-left: 3px; height: 60px; flex: none; }
.apps span { width: 55px; display: flex; align-items: center; justify-content: center; position: relative; }
.apps .run::after, .apps .active::after { content: ""; position: absolute; bottom: 6px; width: 8px; height: 4px; border-radius: 2px; background: #858585; }
.apps .active::after { width: 20px; background: #238090; }
.apps .active::before { content: ""; position: absolute; width: 48px; height: 48px; top: 6px; background: #f8f8f8; border: 1px solid #e4e4e4; border-radius: 4px; }
.tile { background: #f5f9fb; box-shadow: 1px 1px 1px #ccc; position: relative; }
.wa b { position: absolute; right: 6px; top: 9px; width: 20px; height: 20px; border-radius: 50%; background: #238090; color: #fff; text-align: center; font-weight: 400; }
.tray { margin-left: 114px; }
.kbd { margin-left: 17px; }
.lang { width: 76px; text-align: center; flex: none; margin-top: -2px; }
.net { flex: none; margin-top: -2px; }
.clock { width: 88px; text-align: right; flex: none; letter-spacing: -.1px; margin-top: -2px; }
.notice { width: 20px; height: 20px; margin: -2px 0 0 14px; border-radius: 50%; background: #206775; color: #fff; text-align: center; font-weight: 400; }

.watermark { position: absolute; left: 1554px; top: 913px; color: rgba(140, 140, 140, .6); font: 400 23.500px/36px "Open Sans", sans-serif; white-space: nowrap; letter-spacing: .3px; pointer-events: none; }
.watermark span { display: block; font-size: 16.500px; line-height: 24px; letter-spacing: .45px; }
```
